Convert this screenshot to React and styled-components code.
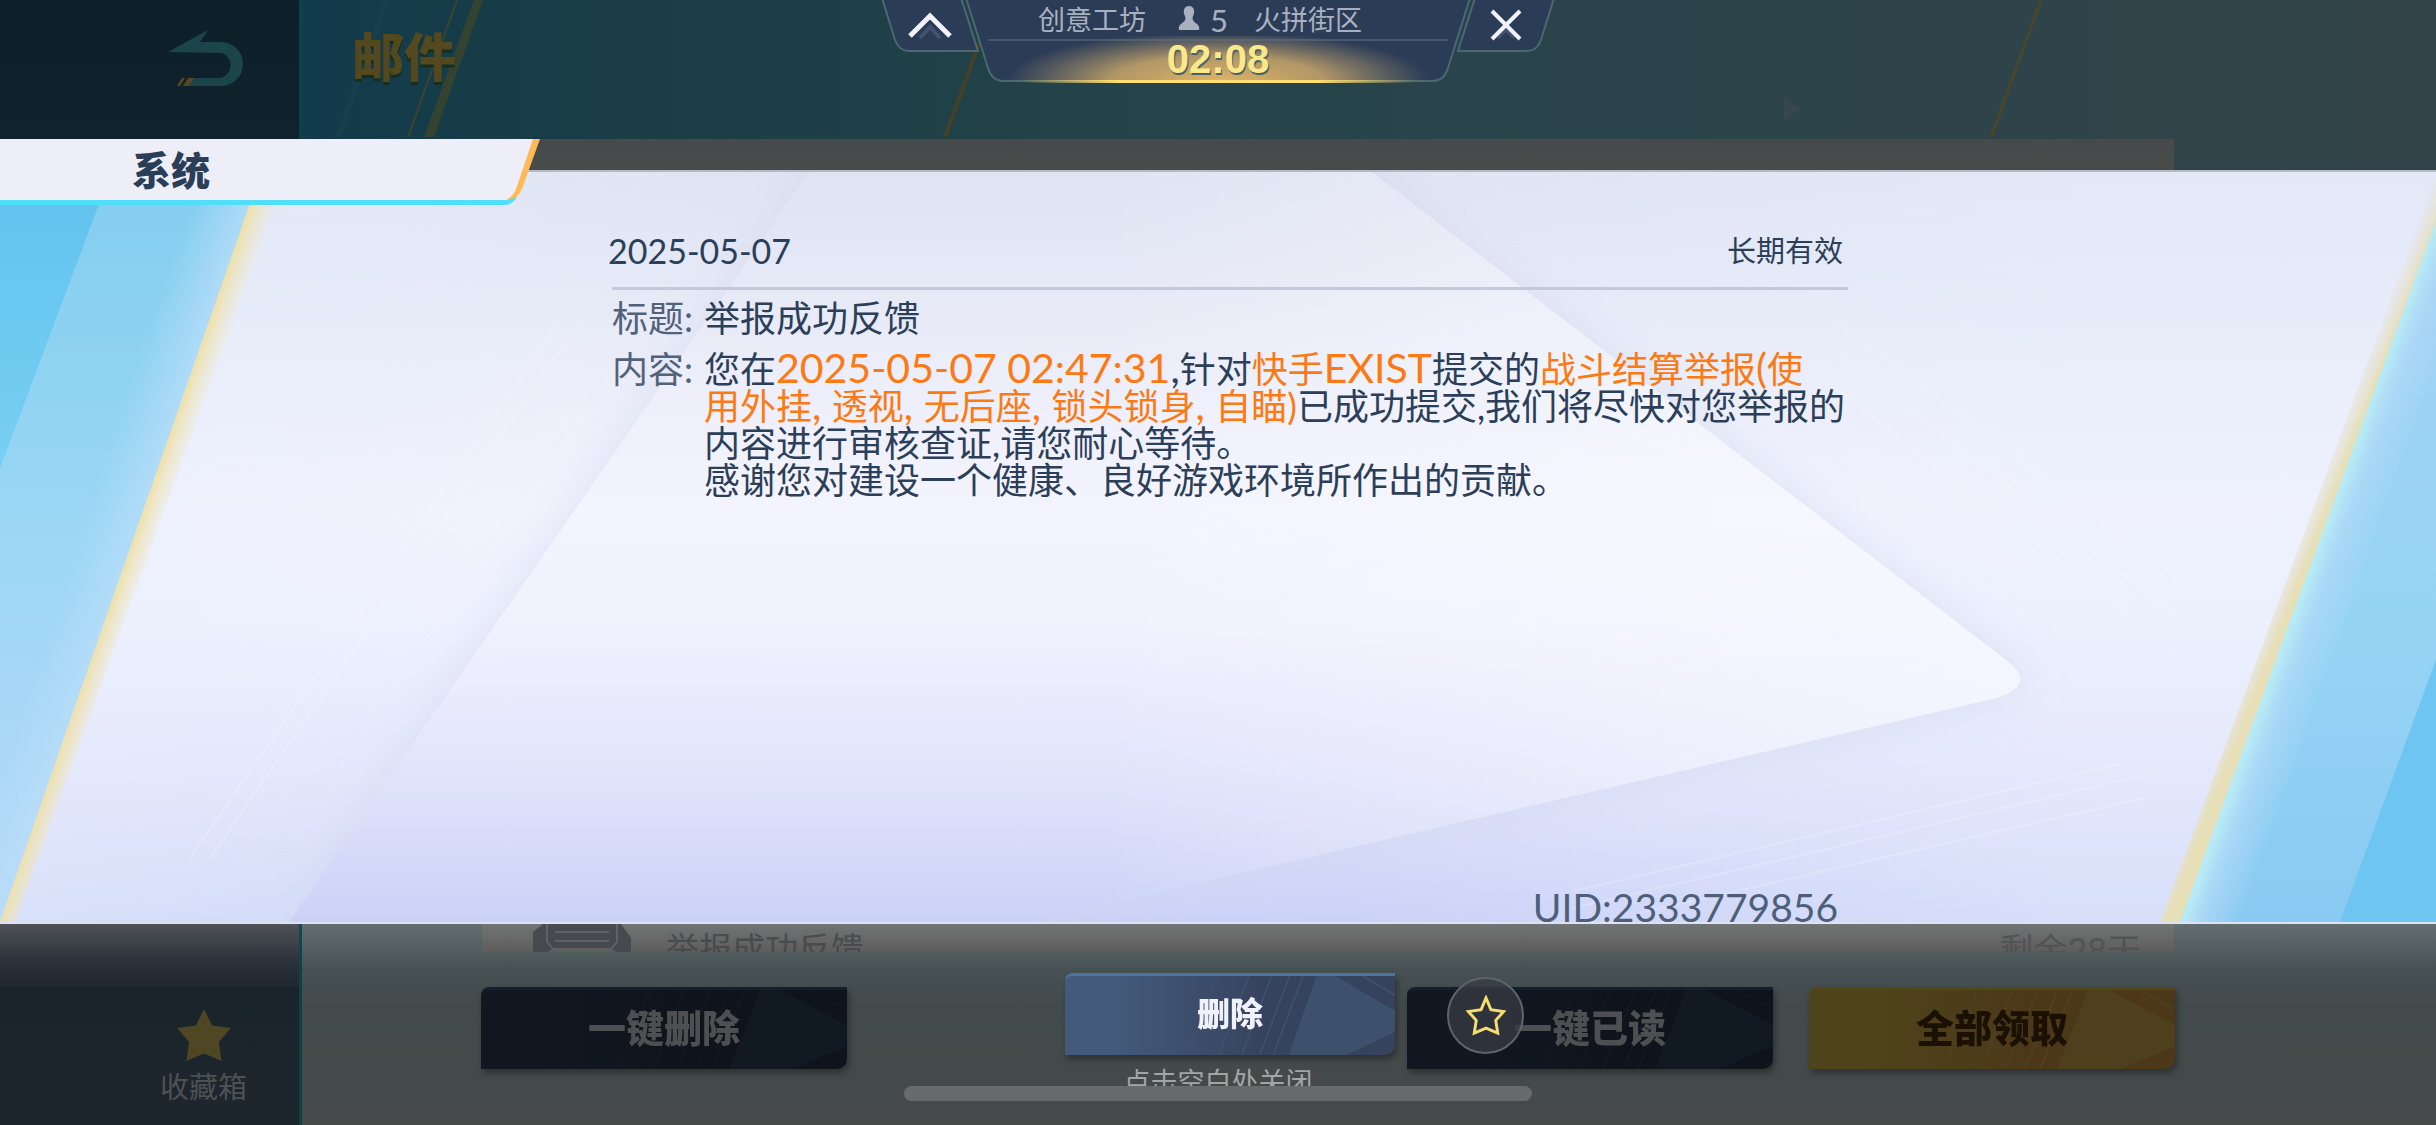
import React from 'react';
import styled, { createGlobalStyle } from 'styled-components';

const GlobalStyle = createGlobalStyle`
  * {
    box-sizing: border-box;
  }

  body {
    margin: 0;
    background: #2c4148;
    font-family: Lato, "Noto Sans CJK SC", sans-serif;
  }

  button {
    border: 0;
    padding: 0;
    background: none;
    font-family: inherit;
    cursor: pointer;
  }

  h1, h2, p, dl, dd, dt, ul {
    margin: 0;
    padding: 0;
    font-weight: 400;
  }
`;

/* every layer shares the one grid cell, later ones lie on top */
const Screen = styled.div`
  display: grid;
  grid-template-columns: minmax(0, 1fr);
  min-height: 100vh;
  overflow: hidden;

  > * {
    grid-area: 1 / 1;
  }
`;

/* ---------- mail page behind the dialog ---------- */

const MailPage = styled.div`
  display: flex;
`;

const Sidebar = styled.aside`
  width: 302px;
  display: flex;
  flex-direction: column;
  justify-content: space-between;
  border-right: 3px solid #0d4146;
  background: linear-gradient(#0d2029 0, #10222b 137px, #484b51 924px, #2a3038 960px, #20272f 987px, #19242a 987px, #1d252d 1080px);
`;

const BackButton = styled.button`
  height: 137px;
  padding: 0 53px 18px 0;
  text-align: right;
`;

const Collection = styled.button`
  height: 138px;
  padding: 22px 34px 0 0;
  margin-left: 142px;
  display: flex;
  flex-direction: column;
  align-items: center;
  gap: 8px;
  color: #4c5253;
  font-size: 29px;
  line-height: 36px;
`;

const MailMain = styled.main`
  flex: 1;
  position: relative;
  display: flex;
  flex-direction: column;
  background:
    linear-gradient(transparent 700px, #5c686b 924px, #454f52 970px, #434a4b 1010px, #454a49),
    linear-gradient(90deg, #123b4b, #1a3d46 15%, #27444b 45%, #2e444a 75%, #32444a);
`;

const Streaks = styled.svg`
  position: absolute;
  left: 0;
  top: 0;
  width: 100%;
  height: 137px;
`;

const MailHeader = styled.header`
  position: relative;
  height: 139px;
  padding: 21px 0 0 50px;
`;

const MailTitle = styled.h1`
  color: #54481f;
  font-size: 52px;
  line-height: 72px;
  font-weight: 900;
  text-shadow: 0 3px 0 #132f22;
`;

const MailList = styled.ul`
  flex: 1;
  margin: 0 262px 0 180px;
  list-style: none;
  display: flex;
  flex-direction: column;
  justify-content: flex-end;
  background: linear-gradient(#464a4b 0, #474b49 31px, #6c6f6f 785px, #5a5958);
`;

const MailItem = styled.li`
  height: 28px;
  overflow: hidden;
  display: flex;
  padding: 0 33px 0 51px;
  color: #454648;
  font-size: 33px;
  line-height: 48px;

  span:last-child {
    margin-left: auto;
    color: #4d4e4f;
    font-size: 34px;
    line-height: 52px;
  }
`;

const ItemTitle = styled.span`
  margin-left: 35px;
`;

const MailActions = styled.footer`
  height: 173px;
  padding: 35px 261px 0 179px;
  display: flex;
  gap: 36px;
`;

const tones = {
  dark: {
    base: '#111822',
    mid: '#0f131b',
    facet: '#111923',
    edge: '#14212d',
    text: '#4e4f50',
  },
  gold: {
    base: '#4e441b',
    mid: '#4c3818',
    facet: '#4e401d',
    edge: '#514817',
    text: '#1a1003',
  },
  blue: {
    base: '#435a7c',
    mid: '#36435e',
    facet: '#3d516d',
    edge: '#4d759c',
    text: '#f0f1fa',
  },
};

const CutButton = styled.button`
  position: relative;
  width: ${({ $width }) => $width}px;
  height: 82px;
  padding-bottom: 5px;
  border-radius: 8px 0 10px 0;
  overflow: hidden;
  flex: none;
  color: ${({ $tone }) => tones[$tone].text};
  background: ${({ $tone }) => `linear-gradient(90deg, ${tones[$tone].base} 15%, ${tones[$tone].mid} 60%)`};
  border-top: 3px solid ${({ $tone }) => tones[$tone].edge};
  font-size: ${({ $size }) => $size}px;
  font-weight: 900;
  line-height: 40px;
  filter: drop-shadow(2px 4px 3px rgba(0, 0, 0, 0.35));

  &:nth-of-type(2) {
    margin-left: auto;
  }

  svg {
    position: absolute;
    inset: 0;
    width: 100%;
    height: 100%;
  }

  span {
    position: relative;
  }
`;

/* ---------- dialog ---------- */

const Dialog = styled.section`
  position: relative;
  display: flex;
  flex-direction: column;
  padding-top: 139px;
`;

const DialogTab = styled.header`
  position: relative;
  z-index: 1;
  width: 540px;
  height: 67px;
  margin-bottom: -36px;
  padding-left: 132px;

  svg {
    position: absolute;
    left: 0;
    top: 0;
  }
`;

const DialogTitle = styled.h2`
  position: relative;
  color: #2b3e57;
  font-size: 39px;
  font-weight: 900;
  line-height: 62px;
`;

const Panel = styled.div`
  position: relative;
  flex: 1;
  display: flex;
  justify-content: center;
  padding-left: 24px;
  border-top: 2px solid #b4b9c8;
  border-bottom: 2px solid #dfe2f4;
`;

const PanelArt = styled.svg`
  position: absolute;
  inset: 0;
  width: 100%;
  height: 100%;
`;

const Letter = styled.article`
  position: relative;
  width: 1236px;
  display: flex;
  flex-direction: column;
  color: #2b3f58;
`;

const LetterTop = styled.div`
  height: 118px;
  padding: 57px 5px 0 0;
  margin-bottom: 10px;
  display: flex;
  justify-content: space-between;
  border-bottom: 3px solid #c3c9d8;
  font-size: 29px;
  line-height: 44px;

  time {
    margin-left: -4px;
    font-size: 34px;
  }
`;

const Fields = styled.dl`
  display: grid;
  grid-template-columns: 92px 1fr;
  row-gap: 14px;
  font-size: 36px;
  line-height: 37px;

  dt {
    color: #52627a;
  }
`;

const Line = styled.span`
  display: block;
  height: 37px;
  white-space: nowrap;
`;

const Mark = styled.em`
  color: #fb7a14;
  font-style: normal;
`;

const Latin = styled.span`
  font-size: 41px;
  line-height: 0;
`;

const Uid = styled.p`
  margin: auto 10px 0 0;
  text-align: right;
  color: #4e6079;
  font-size: 39px;
  line-height: 29px;
`;

const DialogFooter = styled.footer`
  height: 201px;
  padding: 49px 0 0 24px;
  display: flex;
  flex-direction: column;
  align-items: center;
  background: linear-gradient(rgba(255, 255, 255, 0.04), transparent 60px);
`;

const CloseHint = styled.p`
  height: 20px;
  margin: 11px 24px 0 0;
  overflow: hidden;
  color: #a2a5a5;
  font-size: 27px;
  line-height: 32px;
`;

/* ---------- floating pieces ---------- */

const Hud = styled.div`
  position: relative;
  justify-self: center;
  align-self: start;
  width: 674px;
  height: 84px;
  display: grid;
  grid-template-columns: 86px 1fr 86px;
`;

const HudFrame = styled.svg`
  position: absolute;
  left: 0;
  top: 0;
`;

const HudButton = styled.button`
  position: relative;
  height: 50px;
  padding-${({ $side }) => $side}: 12px;
  display: flex;
  align-items: center;
  justify-content: center;
`;

const HudInfo = styled.div`
  position: relative;
  display: flex;
  flex-direction: column;
  align-items: center;
`;

const Match = styled.div`
  display: flex;
  align-items: center;
  height: 40px;
  padding-right: 36px;
  color: #a9b1c1;
  font-size: 27px;
  line-height: 40px;

  svg {
    margin: 0 10px 4px 32px;
  }

  b {
    margin-right: 26px;
    font-size: 31px;
    font-weight: 400;
  }
`;

const Timer = styled.time`
  color: #fbe88b;
  font-family: "Liberation Sans", sans-serif;
  font-size: 40px;
  font-weight: 700;
  line-height: 39px;
  text-shadow: 1px 2px 0 #44646a;
`;

const FloatStar = styled.button`
  position: absolute;
  left: 1447px;
  bottom: 71px;
  width: 77px;
  height: 77px;
  border: 2px solid #5e646b;
  border-radius: 50%;
  background: rgba(55, 58, 66, 0.78);
  display: flex;
  align-items: center;
  justify-content: center;
`;

const HomeBar = styled.div`
  position: relative;
  justify-self: center;
  align-self: end;
  width: 628px;
  height: 15px;
  margin-bottom: 24px;
  border-radius: 8px;
  background: #686b6b;
`;

const solidStar = 'M20 0 L26 13 L40 15 L31 26 L33 41 L20 35 L7 41 L9 26 L0 15 L14 13 Z';
const outlineStar = 'M20 2 L25 14 L38 16 L30 25 L32 38 L20 33 L8 38 L10 25 L2 16 L15 14 Z';
const wedge = 'M809 0 H1372 L2008 492 Q2036 514 2000 528 L1030 754 H289 Z';

function GameButton({ tone, width, size = 38, children }) {
  const t = tones[tone];
  return (
    <CutButton type="button" $tone={tone} $width={width} $size={size}>
      <svg viewBox="0 0 366 82" preserveAspectRatio="none" aria-hidden="true">
        <path d="M279 0 H300 L366 36 V58 L312 82 H248 Z" fill={t.facet} />
        <path
          d="M169 0 L136 82 M204 0 L171 82 M229 0 L196 82 M249 0 L216 82 M264 0 L231 82 M330 0 L366 20"
          stroke={t.facet}
          strokeWidth="2"
        />
      </svg>
      <span>{children}</span>
    </CutButton>
  );
}

function PanelBackground() {
  return (
    <PanelArt viewBox="0 0 2436 754" preserveAspectRatio="none" aria-hidden="true">
      <defs>
        <linearGradient id="sheet" gradientUnits="userSpaceOnUse" x1="0" y1="0" x2="0" y2="754">
          <stop offset="0" stopColor="#dfe3f2" />
          <stop offset="0.25" stopColor="#ebedf9" />
          <stop offset="0.45" stopColor="#f4f4fe" />
          <stop offset="0.6" stopColor="#f1f2fe" />
          <stop offset="0.8" stopColor="#e2e4fb" />
          <stop offset="1" stopColor="#cbd2f7" />
        </linearGradient>
        <linearGradient id="sideTint">
          <stop offset="0" stopColor="#e6eefc" stopOpacity="0.5" />
          <stop offset="0.18" stopColor="#e6eefc" stopOpacity="0.3" />
          <stop offset="0.3" stopColor="#e6eefc" stopOpacity="0" />
          <stop offset="0.55" stopColor="#e6eefc" stopOpacity="0" />
          <stop offset="0.85" stopColor="#e6eefc" stopOpacity="0.45" />
        </linearGradient>
        <linearGradient id="wedgeLight" gradientUnits="userSpaceOnUse" x1="1100" y1="0" x2="2020" y2="0">
          <stop offset="0" stopColor="#fafbff" stopOpacity="0" />
          <stop offset="1" stopColor="#f6f9ff" stopOpacity="0.75" />
        </linearGradient>
        <filter id="soft" x="-10%" y="-10%" width="120%" height="120%">
          <feGaussianBlur stdDeviation="22" />
        </filter>
        <linearGradient id="leftBlue" x1="0" y1="0" x2="0" y2="1">
          <stop offset="0" stopColor="#82cdef" />
          <stop offset="0.5" stopColor="#9cd7f5" />
          <stop offset="1" stopColor="#b8d8f8" />
        </linearGradient>
        <linearGradient id="leftDeep" x1="0" y1="0" x2="0" y2="1">
          <stop offset="0" stopColor="#60c2ee" />
          <stop offset="1" stopColor="#78cff2" />
        </linearGradient>
        <linearGradient id="rightBlue" x1="0" y1="0" x2="0" y2="1">
          <stop offset="0" stopColor="#a2d2f4" />
          <stop offset="0.6" stopColor="#95d4f5" />
          <stop offset="1" stopColor="#8acaf2" />
        </linearGradient>
        <linearGradient id="leftGlow" gradientUnits="userSpaceOnUse" x1="201" y1="0" x2="255" y2="18">
          <stop offset="0" stopColor="#b9def9" stopOpacity="0" />
          <stop offset="1" stopColor="#b9def9" stopOpacity="0.8" />
        </linearGradient>
        <linearGradient id="leftGold" gradientUnits="userSpaceOnUse" x1="261" y1="0" x2="284" y2="8">
          <stop offset="0" stopColor="#eee0a6" />
          <stop offset="1" stopColor="#efe8d2" stopOpacity="0.2" />
        </linearGradient>
        <linearGradient id="rightGold" gradientUnits="userSpaceOnUse" x1="2438" y1="0" x2="2456" y2="7">
          <stop offset="0" stopColor="#e6e4e4" stopOpacity="0.4" />
          <stop offset="1" stopColor="#e6dfb8" />
        </linearGradient>
        <linearGradient id="rightGlow" gradientUnits="userSpaceOnUse" x1="2456" y1="0" x2="2506" y2="18">
          <stop offset="0" stopColor="#b6eaf4" />
          <stop offset="0.3" stopColor="#b0d9f7" stopOpacity="0.8" />
          <stop offset="1" stopColor="#aed8f6" stopOpacity="0" />
        </linearGradient>
      </defs>
      <rect width="2436" height="754" fill="url(#sheet)" />
      <rect width="2436" height="754" fill="url(#sideTint)" />
      <path d={wedge} fill="#cfd6ec" fillOpacity="0.6" filter="url(#soft)" />
      <path d={wedge} fill="url(#sheet)" />
      <path d={wedge} fill="url(#wedgeLight)" />
      <path
        d="M560 150 L190 690 M580 150 L210 690 M1836 218 L2180 484 M1836 180 L2180 450 M1836 150 L2180 410 M1573 723 L2120 595 M1573 740 L2150 605 M1640 745 L2150 628"
        stroke="#ffffff"
        strokeOpacity="0.2"
        strokeWidth="2"
        fill="none"
      />
      <path d="M0 0 H261 L0 754 Z" fill="url(#leftBlue)" />
      <path d="M0 0 H111 L0 298 Z" fill="url(#leftDeep)" />
      <path d="M201 0 H261 L0 754 V581 Z" fill="url(#leftGlow)" />
      <path d="M261 0 H287 L15 754 H0 Z" fill="url(#leftGold)" />
      <path d="M2436 45 V754 H2178 Z" fill="url(#rightBlue)" />
      <path d="M2436 490 V754 H2340 Z" fill="#6fc5f1" />
      <path d="M2436 45 V190 L2238 754 H2178 Z" fill="url(#rightGlow)" />
      <path d="M2436 5 V50 L2180 754 H2160 Z" fill="url(#rightGold)" />
    </PanelArt>
  );
}

function MailBackdrop() {
  return (
    <MailPage>
      <Sidebar>
        <BackButton type="button" aria-label="返回">
          <svg width="80" height="58" viewBox="0 0 80 58">
            <path d="M2 23 L42 1 L34 13 H55 A22 22 0 0 1 55 57 H22 L26 49 H54 A13 13 0 0 0 56 24 Z" fill="#1b444b" />
            <path d="M16 49 H19 L14 57 H11 Z M22 49 H28 L23 57 H17 Z" fill="#574720" />
          </svg>
        </BackButton>
        <Collection type="button">
          <svg width="54" height="52" viewBox="0 0 40 41" preserveAspectRatio="none">
            <path d={solidStar} fill="#4f4623" />
          </svg>
          收藏箱
        </Collection>
      </Sidebar>
      <MailMain>
        <Streaks aria-hidden="true">
          <path d="M172 0 H181 L132 137 H122 Z" fill="#34432f" />
          <path d="M155 0 L106 137" stroke="#3c442f" strokeWidth="2" />
          <path d="M85 0 L36 137" stroke="#193f4d" strokeWidth="5" />
          <path d="M693 0 L643 137" stroke="#444129" strokeWidth="4" />
          <path d="M1739 0 L1689 137" stroke="#4a4629" strokeWidth="3" />
          <path d="M1482 98 L1499 109 L1482 120 Z" fill="#36474d" />
        </Streaks>
        <MailHeader>
          <MailTitle>邮件</MailTitle>
        </MailHeader>
        <MailList>
          <MailItem>
            <svg width="98" height="28" viewBox="0 0 98 28">
              <path d="M10 0 H88 L98 14 V28 H84 L76 24 H22 L14 28 H0 V8 Z" fill="#414449" />
              <path d="M14 0 V18 L20 25 H78 L84 18 V0 M22 8 H76 M22 17 H76" stroke="#5a5c60" strokeWidth="2" fill="none" />
            </svg>
            <ItemTitle>举报成功反馈</ItemTitle>
            <span>剩余28天</span>
          </MailItem>
        </MailList>
        <MailActions>
          <GameButton tone="dark" width={366}>一键删除</GameButton>
          <GameButton tone="dark" width={366}>一键已读</GameButton>
          <GameButton tone="gold" width={366}>全部领取</GameButton>
        </MailActions>
      </MailMain>
    </MailPage>
  );
}

function MailDialog() {
  return (
    <Dialog role="dialog" aria-labelledby="dialog-title">
      <DialogTab>
        <svg width="540" height="67" viewBox="0 0 540 67" aria-hidden="true">
          <path d="M0 0 H534 L518 50 Q513 63 500 63 H0 Z" fill="#eeeef8" />
          <path d="M533 0 H540 L522 50 Q515 64 500 64 Q512 60 516 50 Z" fill="#ffba55" />
          <path d="M0 61 H505 Q511 61 517 58 Q512 66 504 66 H0 Z" fill="#4fdff8" />
        </svg>
        <DialogTitle id="dialog-title">系统</DialogTitle>
      </DialogTab>
      <Panel>
        <PanelBackground />
        <Letter>
          <LetterTop>
            <time dateTime="2025-05-07">2025-05-07</time>
            <span>长期有效</span>
          </LetterTop>
          <Fields>
            <dt>标题:</dt>
            <dd>举报成功反馈</dd>
            <dt>内容:</dt>
            <dd>
              <Line>
                您在<Mark><Latin>2025-05-07 02:47:31</Latin></Mark><Latin>,</Latin>针对<Mark>快手<Latin>EXIST</Latin></Mark>提交的<Mark>战斗结算举报<Latin>(</Latin>使</Mark>
              </Line>
              <Line>
                <Mark>
                  用外挂<Latin>, </Latin>透视<Latin>, </Latin>无后座<Latin>, </Latin>锁头锁身<Latin>, </Latin>自瞄)
                </Mark>
                已成功提交,我们将尽快对您举报的
              </Line>
              <Line>内容进行审核查证,请您耐心等待。</Line>
              <Line>感谢您对建设一个健康、良好游戏环境所作出的贡献。</Line>
            </dd>
          </Fields>
          <Uid>UID:2333779856</Uid>
        </Letter>
      </Panel>
      <DialogFooter>
        <GameButton tone="blue" width={330} size={33}>删除</GameButton>
        <CloseHint>点击空白处关闭</CloseHint>
      </DialogFooter>
      <FloatStar type="button" aria-label="收藏">
        <svg width="42" height="42" viewBox="-1 -1 42 43">
          <path d={outlineStar} fill="none" stroke="#f7dc72" strokeWidth="3" />
        </svg>
      </FloatStar>
    </Dialog>
  );
}

function TopHud() {
  return (
    <Hud>
      <HudFrame width="674" height="84" viewBox="0 0 674 84" aria-hidden="true">
        <defs>
          <radialGradient id="timerGlow" gradientUnits="userSpaceOnUse" cx="0" cy="0" r="1" gradientTransform="translate(337 81) scale(212 50)">
            <stop offset="0" stopColor="#e0b466" />
            <stop offset="0.5" stopColor="#c9a66a" stopOpacity="0.85" />
            <stop offset="1" stopColor="#b09a70" stopOpacity="0" />
          </radialGradient>
          <linearGradient id="timerLine">
            <stop offset="0" stopColor="#ffe070" stopOpacity="0" />
            <stop offset="0.25" stopColor="#ffe070" />
            <stop offset="0.75" stopColor="#ffe070" />
            <stop offset="1" stopColor="#ffe070" stopOpacity="0" />
          </linearGradient>
        </defs>
        <g fill="#2b3c57" stroke="#4b6871" strokeWidth="2">
          <path d="M1 -2 L14 40 Q18 51 28 51 H97 L80 -2 Z" />
          <path d="M673 -2 L660 40 Q656 51 646 51 H577 L594 -2 Z" />
          <path d="M85 -2 L107 68 Q111 81 122 81 H552 Q563 81 567 68 L589 -2 Z" />
        </g>
        <rect x="125" y="36" width="424" height="45" fill="url(#timerGlow)" />
        <path d="M107 40 H567" stroke="#66758a" strokeWidth="1" />
        <rect x="140" y="80" width="394" height="3" fill="url(#timerLine)" />
      </HudFrame>
      <HudButton type="button" $side="left" aria-label="收起">
        <svg width="46" height="30" viewBox="0 0 46 30">
          <path d="M13 28 L23 17 L33 28" fill="none" stroke="#44526d" strokeWidth="4" />
          <path d="M3 26 L23 6 L43 26" fill="none" stroke="#f1f2fc" strokeWidth="5" />
        </svg>
      </HudButton>
      <HudInfo>
        <Match>
          创意工坊
          <svg width="22" height="24" viewBox="0 0 22 24" aria-hidden="true">
            <path d="M11 0 C17 0 17 7 15 10 C14 14 15 15 19 18 Q22 20 21 24 H1 Q0 20 3 18 C7 15 8 14 7 10 C5 7 5 0 11 0 Z" fill="#a9b1c1" />
          </svg>
          <b>5</b>
          火拼街区
        </Match>
        <Timer>02:08</Timer>
      </HudInfo>
      <HudButton type="button" $side="right" aria-label="关闭">
        <svg width="34" height="34" viewBox="0 0 34 34">
          <path d="M9 30 L17 22 L25 30" fill="none" stroke="#44526d" strokeWidth="3" />
          <path d="M3 3 L31 31 M31 3 L3 31" stroke="#f1f2fc" strokeWidth="4" />
        </svg>
      </HudButton>
    </Hud>
  );
}

export default function App() {
  return (
    <>
      <GlobalStyle />
      <Screen>
        <MailBackdrop />
        <MailDialog />
        <HomeBar />
        <TopHud />
      </Screen>
    </>
  );
}
